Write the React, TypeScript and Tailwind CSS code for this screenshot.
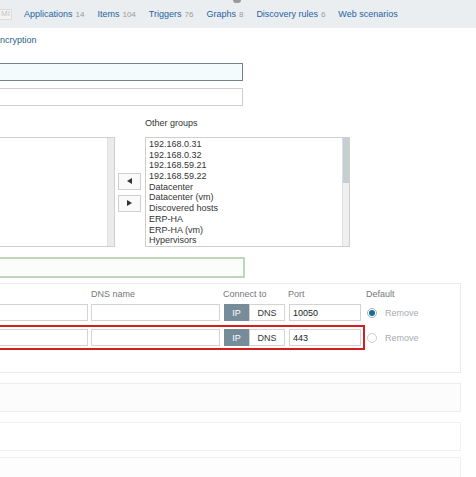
import React from 'react'

const NAV = [
  { label: 'Applications', count: '14' },
  { label: 'Items', count: '104' },
  { label: 'Triggers', count: '76' },
  { label: 'Graphs', count: '8' },
  { label: 'Discovery rules', count: '6' },
  { label: 'Web scenarios', count: '' },
]

const GROUPS = [
  '192.168.0.31',
  '192.168.0.32',
  '192.168.59.21',
  '192.168.59.22',
  'Datacenter',
  'Datacenter (vm)',
  'Discovered hosts',
  'ERP-HA',
  'ERP-HA (vm)',
  'Hypervisors',
]

function Arrow({ dir }: { dir: 'left' | 'right' }) {
  return (
    <div className="w-[23px] h-[17px] border border-[#cfcfcf] bg-[#fafafa] flex items-center justify-center">
      <svg width="5" height="6" viewBox="0 0 5 6">
        {dir === 'left' ? <polygon points="5,0 5,6 0,3" fill="#333" /> : <polygon points="0,0 0,6 5,3" fill="#333" />}
      </svg>
    </div>
  )
}

function InterfaceRow({ port, checked, error }: { port: string; checked: boolean; error?: boolean }) {
  return (
    <div className="flex items-center">
      <div className={`w-[383px] p-[2px] border-2 flex gap-[3px] ${error ? 'border-[#d71e1e]' : 'border-transparent'}`}>
        <div className="w-[102px] h-[17px] border border-[#d3d3d3] bg-white" />
        <div className="w-[129px] h-[17px] border border-[#d3d3d3] bg-white" />
        <div className="flex ml-[1px]">
          <div className="w-[25px] h-[17px] bg-[#768d99] text-white flex items-center justify-center">IP</div>
          <div className="w-[36px] h-[17px] border border-[#d3d3d3] bg-white text-[#333] flex items-center justify-center">DNS</div>
        </div>
        <div className="w-[72px] h-[17px] border border-[#d3d3d3] bg-white text-[#222] flex items-center pl-[3px] ml-[1px]">{port}</div>
      </div>
      <div className={`ml-[2px] w-[10px] h-[10px] rounded-full border bg-white flex items-center justify-center ${checked ? 'border-[#9db6c4]' : 'border-[#cfcfcf]'}`}>
        {checked && <div className="w-[6px] h-[6px] rounded-full bg-[#1d6b92]" />}
      </div>
      <span className="ml-[8px] text-[#a5acb0]">Remove</span>
    </div>
  )
}

export default function App() {
  return (
    <div className="relative w-[476px] h-[477px] overflow-hidden bg-white text-[9px] leading-[10px]" style={{ fontFamily: '"Liberation Sans", Arial, sans-serif' }}>
      {/* spinner sliver */}
      <div className="absolute left-[233px] top-0 w-[8px] h-[3px] rounded-b-full bg-[#9a9a9a]" />

      {/* tab nav */}
      <div className="h-[28px] bg-[#ebeef0] flex items-center gap-[12px]">
        <div className="h-[11px] w-[12px] pl-[1px] border border-l-0 border-[#dcdcdc] bg-[#f3f3f3] text-[#c4c4c4] text-[8px] flex items-center">MI</div>
        {NAV.map(n => (
          <div key={n.label} className="flex items-baseline gap-[3px] mr-[1px]">
            <span className="text-[#2763a0]">{n.label}</span>
            {n.count && <span className="text-[#9a9a9a] text-[8px]">{n.count}</span>}
          </div>
        ))}
      </div>

      <div className="mt-[7px] text-[#2b5f8a]">ncryption</div>

      {/* form */}
      <div className="-ml-[20px] mt-[18px] w-[263px] h-[18px] border border-[#6f8288] bg-[#f3fbfd]" />
      <div className="-ml-[20px] mt-[7px] w-[263px] h-[18px] border border-[#cfcfcf] bg-white" />

      <div className="mt-[12px] pl-[145px] text-[#333]">Other groups</div>

      <div className="mt-[9px] flex items-center">
        <div className="-ml-[20px] w-[135px] h-[110px] border border-[#cfcfcf] bg-white flex justify-end">
          <div className="w-[7px] h-full bg-[#ebebeb] border-l border-[#e0e0e0]" />
        </div>
        <div className="ml-[3px] flex flex-col gap-[5px]">
          <Arrow dir="left" />
          <Arrow dir="right" />
        </div>
        <div className="ml-[4px] w-[205px] h-[110px] border border-[#cfcfcf] bg-white flex">
          <div className="flex-1 pl-[3px] pt-[1px] text-[#333] overflow-hidden">
            {GROUPS.map(g => (
              <div key={g} className="h-[10.7px] leading-[10.7px]">{g}</div>
            ))}
          </div>
          <div className="w-[7px] h-full bg-[#efefef] border-l border-[#dedede]">
            <div className="h-[45px] bg-[#c5cfd1]" />
          </div>
        </div>
      </div>

      <div className="-ml-[20px] mt-[10px] w-[265px] h-[21px] border-2 border-[#bfd6ba] bg-[#fbfdfb]" />

      {/* interfaces */}
      <div className="-ml-[20px] mt-[5px] w-[481px] border border-[#ebebeb] pt-[5px] pb-[22px] pl-[1px]">
        <div className="h-[10px] relative text-[#777]">
          <span className="absolute left-[109px]">DNS name</span>
          <span className="absolute left-[241px]">Connect to</span>
          <span className="absolute left-[306px]">Port</span>
          <span className="absolute left-[384px]">Default</span>
        </div>
        <div className="mt-[1px]">
          <InterfaceRow port="10050" checked />
          <InterfaceRow port="443" checked={false} error />
        </div>
      </div>

      <div className="-ml-[20px] mt-[10px] w-[481px] h-[29px] border border-[#ececec] bg-[#fcfcfc]" />
      <div className="-ml-[20px] mt-[10px] w-[481px] h-[29px] border border-[#f0f0f0] bg-white" />
      <div className="-ml-[20px] mt-[6px] w-[481px] h-[40px] border border-[#f0f0f0] bg-[#fdfdfd]" />
    </div>
  )
}
